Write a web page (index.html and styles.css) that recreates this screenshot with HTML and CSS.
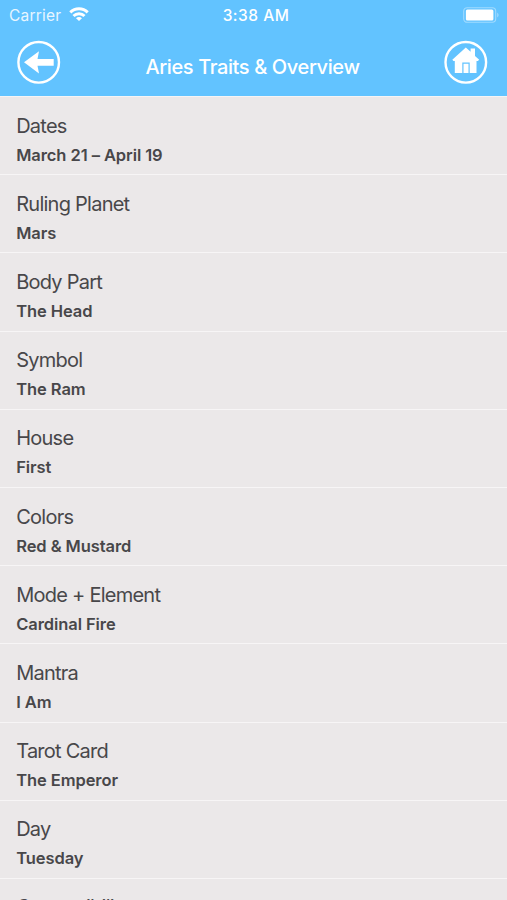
FILE: index.html
```html
<!DOCTYPE html>
<html lang="en">
<head>
    <meta charset="UTF-8">
    <meta name="viewport" content="width=device-width, initial-scale=1.0">
    <title>Aries Traits &amp; Overview</title>
    <link rel="stylesheet" href="styles.css">
</head>
<body>
    <header class="header">
        <div class="status-bar">
            <div class="carrier">
                <span>Carrier</span>
                <svg class="wifi" viewBox="0 0 20 14" fill="none" stroke="#fff" stroke-width="3">
                    <path d="M1.3 5.4a12.4 12.4 0 0 1 17.4 0"/>
                    <path d="M4.5 9a7.8 7.8 0 0 1 11 0"/>
                    <path d="M10 14L7 11.2a4.2 4.2 0 0 1 6 0z" fill="#fff" stroke="none"/>
                </svg>
            </div>
            <span class="time">3:38 AM</span>
            <svg class="battery" viewBox="0 0 37 16">
                <rect x="0.7" y="0.7" width="32" height="14.6" rx="3.5" fill="none" stroke="#fff" stroke-opacity="0.4" stroke-width="1.1"/>
                <rect x="2.9" y="2.6" width="27.5" height="10.8" rx="1.5" fill="#fff"/>
                <path d="M34.4 5.5q2.2 2.5 0 5z" fill="#fff" fill-opacity="0.5"/>
            </svg>
        </div>

        <div class="nav">
            <a href="#" class="nav-btn" aria-label="Back">
                <svg viewBox="0 0 44 44">
                    <circle cx="21.7" cy="22.3" r="20.3" fill="none" stroke="#fff" stroke-width="2.4"/>
                    <path d="M7 22.3L22 11.2l-1.5 7.8H36.7v6.8H20.5L22 33.6z" fill="#fff"/>
                </svg>
            </a>
            <h1 class="title">Aries Traits &amp; Overview</h1>
            <a href="#" class="nav-btn" aria-label="Home">
                <svg viewBox="0 0 44 44">
                    <circle cx="21.8" cy="22.3" r="20.3" fill="none" stroke="#fff" stroke-width="2.4"/>
                    <path d="M21.8 7.5l4.8 4.3V8.4h4.4v7.6l4.2 3.8-1.3 1.2h-1.4v12H10.8V21H9.5l-1.2-1.2z" fill="#fff"/>
                    <path d="M18.9 33v-9.8h6.2V33" fill="none" stroke="#62c3ff" stroke-width="1.2"/>
                </svg>
            </a>
        </div>
    </header>

    <ul class="traits">
        <li><span class="label">Dates</span><strong>March 21 – April 19</strong></li>
        <li><span class="label">Ruling Planet</span><strong>Mars</strong></li>
        <li><span class="label">Body Part</span><strong>The Head</strong></li>
        <li><span class="label">Symbol</span><strong>The Ram</strong></li>
        <li><span class="label">House</span><strong>First</strong></li>
        <li><span class="label">Colors</span><strong>Red &amp; Mustard</strong></li>
        <li><span class="label">Mode + Element</span><strong>Cardinal Fire</strong></li>
        <li><span class="label">Mantra</span><strong>I Am</strong></li>
        <li><span class="label">Tarot Card</span><strong>The Emperor</strong></li>
        <li><span class="label">Day</span><strong>Tuesday</strong></li>
        <li><span class="label">Compatibility</span></li>
    </ul>
</body>
</html>
```
FILE: styles.css
```css
* {
    margin: 0;
    padding: 0;
    box-sizing: border-box;
}

body {
    height: 100vh;
    overflow: hidden;
    display: flex;
    flex-direction: column;
    background: #ebe8e9;
    color: #48474a;
    font-family: Inter, "Liberation Sans", sans-serif;
}

/* Header */
.header {
    flex: none;
    height: 96px;
    background: #62c3ff;
    color: #fff;
}

.status-bar {
    display: grid;
    grid-template-columns: 1fr auto 1fr;
    align-items: center;
    height: 30px;
    padding: 0 7px 0 9px;
    font-size: 15.5px;
}

.carrier {
    display: flex;
    align-items: center;
    gap: 8px;
    letter-spacing: 0.2px;
}

.carrier span {
    opacity: 0.85;
}

.wifi {
    width: 20px;
    height: 14px;
    margin-top: -2px;
}

.time {
    font-weight: 500;
    padding-left: 3px;
    letter-spacing: 0.5px;
}

.battery {
    width: 37px;
    height: 16px;
    justify-self: end;
}

.nav {
    display: flex;
    justify-content: space-between;
    align-items: center;
    padding: 10px 19px 0 17px;
}

.nav-btn,
.nav-btn svg {
    display: block;
    width: 44px;
    height: 44px;
}

.title {
    padding-top: 9px;
    font-size: 20px;
    font-weight: 500;
    letter-spacing: -0.38px;
}

/* Traits list */
.traits {
    flex: 1;
    min-height: 0;
    overflow: hidden;
    list-style: none;
    border-top: 1px solid #f5f4f5;
}

.traits li {
    height: 78.2px;
    padding: 14.6px 16px 0 16.2px;
    border-bottom: 1px solid #f7f5f6;
}

.label,
.traits strong {
    display: block;
    white-space: nowrap;
}

.label {
    font-size: 20px;
    line-height: 28px;
    letter-spacing: -0.75px;
}

.traits strong {
    margin-top: 3px;
    font-size: 16.5px;
    font-weight: 600;
    line-height: 24px;
    letter-spacing: -0.08px;
}
```
